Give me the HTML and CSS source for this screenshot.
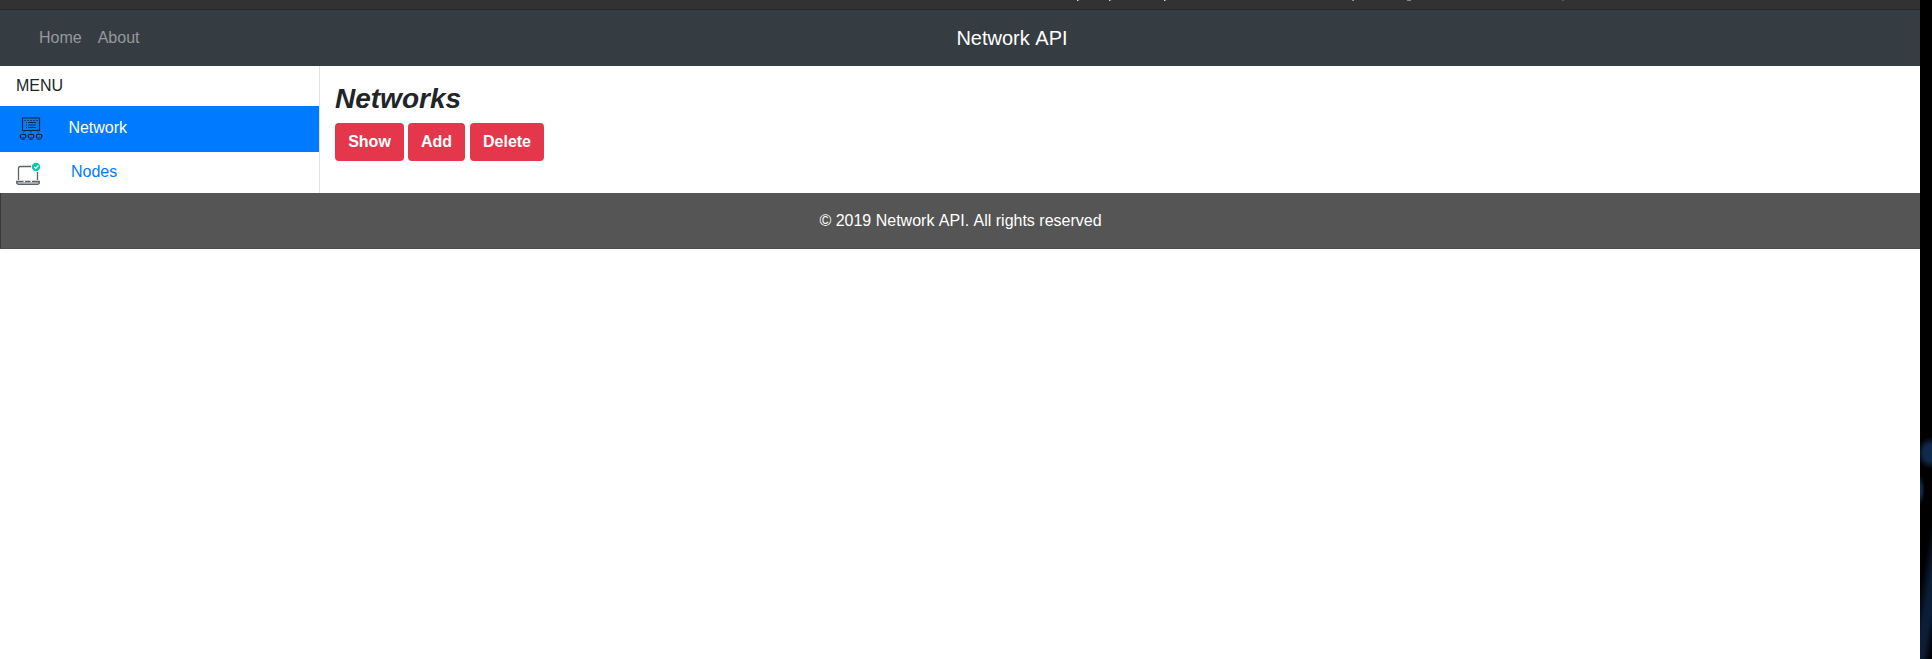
FILE: index.html
```html
<!DOCTYPE html>
<html lang="en">
<head>
<meta charset="utf-8">
<title>Network API</title>
<link rel="stylesheet" href="styles.css">
</head>
<body>
<div class="screen">
  <div class="window">
    <div class="toolbar">
      <svg width="1920" height="1" viewBox="0 0 1920 1"><path stroke="#d8d4cf" stroke-width="1" d="M1077 .5h1.500M1109 .5h1.500M1164 .5h1.500M1352.500 .5h1.200"/><path stroke="#85857f" stroke-width="1" d="M1407 .5h4M1562.500 .5h1"/></svg>
    </div>
    <nav class="navbar">
      <div class="links"><a>Home</a><a>About</a></div>
      <div class="brand">Network API</div>
    </nav>
    <div class="content">
      <aside class="sidebar">
        <div class="title">MENU</div>
        <a class="item active">
          <svg class="icon-network" width="25" height="26" viewBox="0 0 25 26" fill="none" stroke="#0b2744">
            <path d="M3.500 2h17v12.500h-17z" stroke-width="1.200"/>
            <path d="M5 4.500h14" stroke-dasharray="2 1" stroke-width=".7"/>
            <path d="M7 6.500h1M7 9h1M7 11.500h1M9 6.500h8M9 9h8M9 11.500h8" stroke-width=".9"/>
            <path d="M5.500 15l-1.500 2.500M12 15v2.500M18.500 15l1.500 2.500" stroke-width=".6"/>
            <path d="M1.500 18.500h5v3.500h-5zM9.500 18.500h5v3.500h-5zM17.500 18.500h5v3.500h-5z" stroke-width="1"/>
            <path d="M0 20h1.500M6.500 20H8M8.500 20h1M14.500 20H16M16.500 20h1M22.500 20H24" stroke-width="1.500" opacity=".7"/>
            <path d="M2.500 23.500h3M10.500 23.500h3M18.500 23.500h3" stroke-width=".8"/>
          </svg>
          <span>Network</span>
        </a>
        <a class="item nodes">
          <svg class="icon-nodes" width="26" height="24" viewBox="0 0 26 24" fill="none" stroke="#5b6269" stroke-width="1.300">
            <path d="M2.500 18V6.500q0-2 2-2H15M21.500 10v8"/>
            <path d="M.7 19.500h22.600v1q0 1.800-2 1.800H2.700q-2 0-2-1.800z" fill="#bcc2c4"/>
            <path d="M7.500 19.300H9M14.500 19.300H16" stroke="#fff" stroke-width="1.800"/>
            <circle cx="20" cy="5" r="4.200" fill="#09c9a4" stroke="none"/>
            <path d="M18.200 4.800l1.500 1.500 2.800-2.800" stroke="#fff" stroke-width="1.200"/>
          </svg>
          <span>Nodes</span>
        </a>
      </aside>
      <main class="main">
        <h1>Networks</h1>
        <div class="buttons"><button class="show">Show</button><button class="add">Add</button><button class="delete">Delete</button></div>
      </main>
    </div>
    <footer class="footer">© 2019 Network API. All rights reserved</footer>
  </div>
  <div class="desktop"></div>
</div>
</body>
</html>
```
FILE: styles.css
```css
* { box-sizing: border-box; }
body {
  margin: 0;
  font: 16px/24px "Liberation Sans", Arial, sans-serif;
  font-kerning: none;
  color: #212529;
  background: #fff;
  overflow: hidden;
}
.screen { display: flex; height: 659px; }
.window { width: 1920px; flex: none; }
.toolbar { height: 10px; background: #323232; border-bottom: 1px solid #252628; }
.toolbar svg { display: block; }
.navbar {
  display: flex;
  align-items: center;
  height: 56px;
  background: #363d42;
}
.links { display: flex; gap: 16px; width: 956.4px; padding-left: 39px; color: #96999b; }
.brand { font-size: 20px; line-height: 30px; color: #fff; }
.content { display: flex; height: 127px; }
.sidebar { width: 320px; border-right: 1px solid #dee2e6; }
.title { height: 40px; padding: 8px 16px; }
.item { display: flex; align-items: flex-start; color: #007bff; }
.active { height: 46px; padding: 10px 0 0 19px; background: #007bff; color: #fff; }
.icon-network { margin-right: 24.4px; }
.nodes { height: 41px; padding: 8px 0 0 16px; }
.icon-nodes { margin: 2px 29px 0 0; }
.main { padding: 16px 15px; }
h1 { margin: 0 0 8px; font-size: 28px; line-height: 33px; font-style: italic; font-weight: 700; }
.buttons { display: flex; }
button {
  height: 38px;
  padding: 0;
  border: 0;
  border-radius: 4px;
  background: #e4374b;
  color: #fff;
  font: 700 16px/24px "Liberation Sans", Arial, sans-serif;
}
.show { width: 69px; margin-right: 4px; }
.add { width: 57px; margin-right: 5px; }
.delete { width: 74px; }
.footer {
  height: 56px;
  padding: 16px 0;
  border: 1px solid #4c4e50;
  border-width: 0 0 1px 1px;
  border-left-color: #343a40;
  background: #555;
  color: #fff;
  text-align: center;
}
.desktop {
  flex: 1;
  background:
    radial-gradient(ellipse 13px 16px at 10px 453px, #11294b 50%, transparent),
    radial-gradient(ellipse 5px 15px at 0 490px, #11294b 35%, transparent),
    linear-gradient(100deg, transparent 0 35%, #0c1d37 60% 75%, transparent 95%) 0 510px / 12px 149px no-repeat,
    #000;
}
```
